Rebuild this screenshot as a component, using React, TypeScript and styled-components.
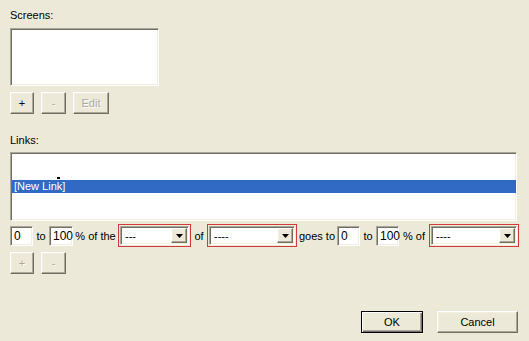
import React from 'react';
import styled, { createGlobalStyle, css } from 'styled-components';

const GlobalStyle = createGlobalStyle`
  html, body {
    margin: 0;
    padding: 0;
    background: #ece9d8;
  }
  body {
    font-family: "Liberation Sans", Arial, sans-serif;
    font-size: 11px;
    color: #000;
  }
`;

// classic win32 3D edges
const sunken = css`
  border: 1px solid;
  border-color: #aca899 #ffffff #ffffff #aca899;
  box-shadow: inset 1px 1px 0 #716f64, inset -1px -1px 0 #f1efe2;
`;

const raised = css`
  border: 1px solid;
  border-color: #ffffff #716f64 #716f64 #ffffff;
  box-shadow: inset -1px -1px 0 #aca899, inset 1px 1px 0 #f1efe2;
`;

const Dialog = styled.div`
  width: 529px;
  height: 341px;
  box-sizing: border-box;
  padding: 9px 10px 0 10px;
  display: flex;
  flex-direction: column;
`;

const Label = styled.div<{ $top?: number }>`
  line-height: 13px;
  height: 13px;
  margin-top: ${({ $top }) => $top ?? 0}px;
`;

const ListBox = styled.div<{ $w?: number; $h: number; $top: number }>`
  ${sunken};
  position: relative;
  box-sizing: border-box;
  width: ${({ $w }) => ($w ? `${$w}px` : '507px')};
  height: ${({ $h }) => $h}px;
  margin-top: ${({ $top }) => $top}px;
  background: #fff;
  padding: 1px 0 1px 1px;
  overflow: hidden;
`;

const ListItem = styled.div<{ $selected?: boolean }>`
  height: 13px;
  line-height: 13px;
  padding-left: 2px;
  background: ${({ $selected }) => ($selected ? '#316ac5' : 'transparent')};
  color: ${({ $selected }) => ($selected ? '#fff' : '#000')};
  white-space: nowrap;
`;

const CursorMark = styled.div`
  position: absolute;
  left: 46px;
  top: 24px;
  width: 3px;
  height: 2px;
  background: #000;
`;

const ButtonRow = styled.div<{ $top: number }>`
  display: flex;
  gap: 7px;
  margin-top: ${({ $top }) => $top}px;
`;

const Button = styled.button<{ $w: number; $disabled?: boolean; $default?: boolean }>`
  box-sizing: border-box;
  width: ${({ $w }) => $w}px;
  height: 22px;
  padding: 0;
  margin: 0;
  background: #ece9d8;
  font-family: inherit;
  font-size: 11px;
  ${raised};
  ${({ $default }) =>
    $default &&
    css`
      border: 1px solid #000;
      box-shadow: inset 1px 1px 0 #fff, inset -1px -1px 0 #716f64, inset -2px -2px 0 #aca899;
    `}
  color: ${({ $disabled }) => ($disabled ? '#aca899' : '#000')};
  text-shadow: ${({ $disabled }) => ($disabled ? '1px 1px 0 #fff' : 'none')};
`;

const CondRow = styled.div`
  display: flex;
  align-items: center;
  height: 23px;
  margin-top: 3px;
`;

const Field = styled.div<{ $w: number }>`
  ${sunken};
  box-sizing: border-box;
  width: ${({ $w }) => $w}px;
  height: 20px;
  background: #fff;
  padding: 2px 0 0 3px;
  line-height: 14px;
  font-size: 12px;
`;

const Word = styled.span<{ $w: number }>`
  width: ${({ $w }) => $w}px;
  text-align: center;
  font-size: 11px;
`;

const Combo = styled.div<{ $w: number }>`
  box-sizing: border-box;
  width: ${({ $w }) => $w}px;
  height: 23px;
  border: 1px solid #d03c3c;
  padding: 1px;
  display: flex;
`;

const ComboField = styled.div`
  ${sunken};
  box-sizing: border-box;
  flex: 1;
  background: #fff;
  display: flex;
  align-items: stretch;
  padding: 1px;
`;

const ComboText = styled.span`
  flex: 1;
  padding: 2px 0 0 3px;
  line-height: 13px;
`;

const DropButton = styled.div`
  ${raised};
  box-sizing: border-box;
  width: 16px;
  background: #ece9d8;
  display: flex;
  align-items: center;
  justify-content: center;
`;

const Footer = styled.div`
  display: flex;
  justify-content: flex-end;
  gap: 14px;
  margin-top: 37px;
  padding-right: 1px;
`;

const Arrow = () => (
  <svg width="7" height="4" viewBox="0 0 7 4">
    <path d="M0 0h7L3.5 4z" fill="#000" />
  </svg>
);

const Select: React.FC<{ w: number; value: string }> = ({ w, value }) => (
  <Combo $w={w}>
    <ComboField>
      <ComboText>{value}</ComboText>
      <DropButton>
        <Arrow />
      </DropButton>
    </ComboField>
  </Combo>
);

const links = ['', '', '[New Link]'];

const App: React.FC = () => {
  return (
    <>
      <GlobalStyle />
      <Dialog>
        <Label>Screens:</Label>
        <ListBox $w={149} $h={58} $top={6} />
        <ButtonRow $top={6}>
          <Button $w={24}>+</Button>
          <Button $w={25} $disabled>-</Button>
          <Button $w={36} $disabled>Edit</Button>
        </ButtonRow>

        <Label $top={20}>Links:</Label>
        <ListBox $h={69} $top={5}>
          {links.map((l, i) => (
            <ListItem key={i} $selected={i === links.length - 1}>
              {l}
            </ListItem>
          ))}
          <CursorMark />
        </ListBox>

        <CondRow>
          <Field $w={23}>0</Field>
          <Word $w={16}>to</Word>
          <Field $w={24}>100</Field>
          <Word $w={45}>% of the</Word>
          <Select w={73} value="---" />
          <Word $w={16}>of</Word>
          <Select w={90} value="----" />
          <Word $w={40}>goes to</Word>
          <Field $w={23}>0</Field>
          <Word $w={16}>to</Word>
          <Field $w={23}>100</Field>
          <Word $w={30}>% of</Word>
          <Select w={90} value="----" />
        </CondRow>

        <ButtonRow $top={5}>
          <Button $w={24} $disabled>+</Button>
          <Button $w={25} $disabled>-</Button>
        </ButtonRow>

        <Footer>
          <Button $w={62} $default>OK</Button>
          <Button $w={81}>Cancel</Button>
        </Footer>
      </Dialog>
    </>
  );
};

export default App;
